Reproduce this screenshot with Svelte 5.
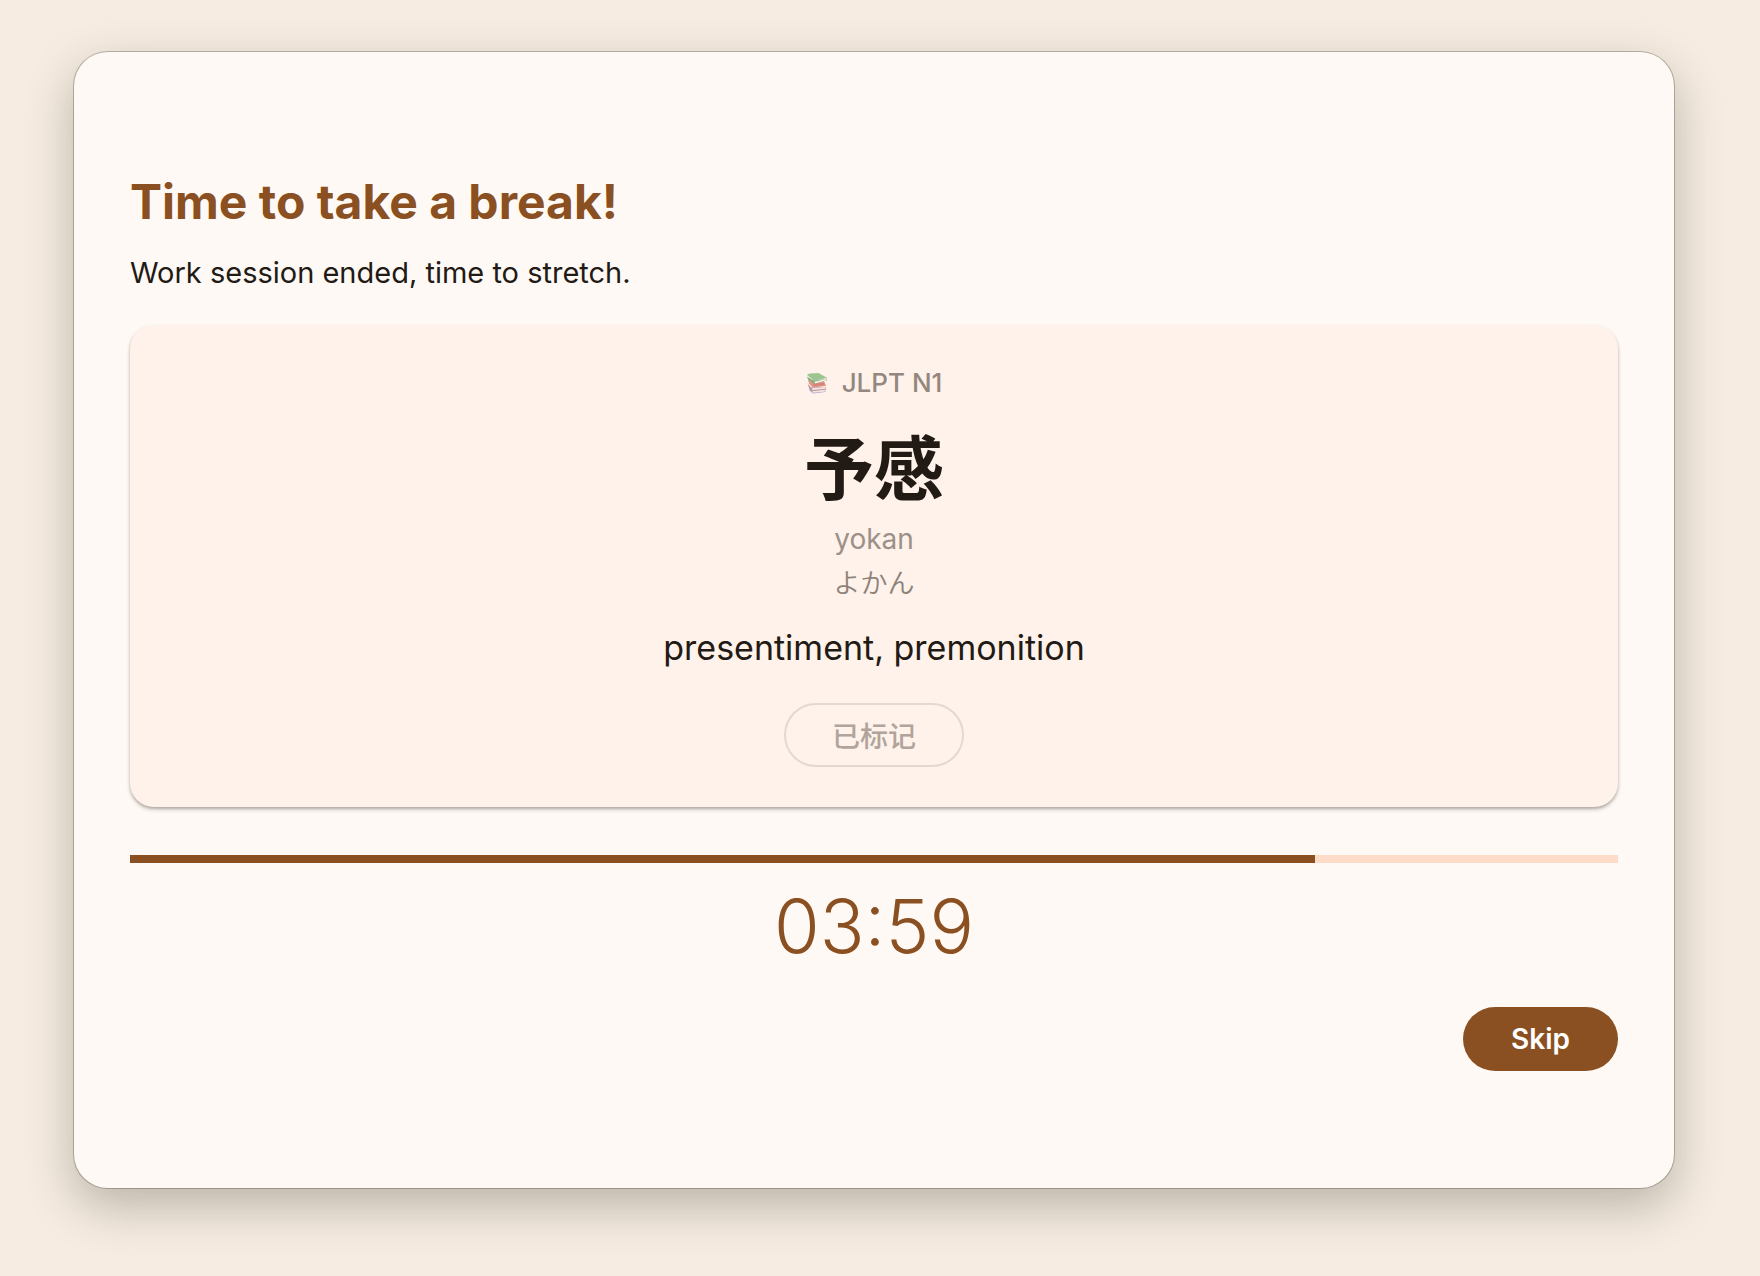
<script>
  let total = 300;
  let remaining = 239;

  const word = {
    level: 'JLPT N1',
    text: '予感',
    romaji: 'yokan',
    kana: 'よかん',
    meaning: 'presentiment, premonition'
  };

  function pad(n) {
    return String(n).padStart(2, '0');
  }

  function skip() {
    remaining = 0;
  }

  $: clock = `${pad(Math.floor(remaining / 60))}:${pad(remaining % 60)}`;
  $: percent = (remaining / total) * 100;
</script>

<div class="desktop">
  <main class="window">
    <h1>Time to take a break!</h1>
    <p class="subtitle">Work session ended, time to stretch.</p>

    <section class="card">
      <div class="level">
        <svg class="books" viewBox="0 0 22 22" aria-hidden="true">
          <path d="M3 15.5 L15 15 L20 18 L19.5 20 L7 21.5 L3.5 18.5 Z" fill="#a9a6c4" />
          <path d="M6.5 19 L19.5 17.5 L19.5 19.5 L7 20.8 Z" fill="#f1e6e3" />
          <path d="M2 12 L6 16.5 L20 15 L20 17.5 L6.5 19 L2.5 15 Z" fill="#c9908f" />
          <path d="M6 16.3 L19.5 15 L19.5 16.8 L6.5 18 Z" fill="#f6e9e4" />
          <path d="M2 7.5 L18 9 L20 14 L6.5 15.5 L3 11.5 Z" fill="#e0998b" />
          <path d="M6.5 11.5 L18 10.5 L18.5 13 L7 14.5 Z" fill="#d98379" />
          <path d="M1 4.5 L8 9 L21 6.5 L21 8.5 L8.5 12 L2 7.5 Z" fill="#86ad80" />
          <path d="M8.5 9.7 L20.5 6.8 L20.5 8.4 L9 11.4 Z" fill="#f2ede2" />
          <path d="M1 3 Q2 1.5 4 1.5 L12.5 1 L21 5.8 L8.5 9 Z" fill="#9cc592" />
        </svg>
        <span>{word.level}</span>
      </div>
      <h2 lang="ja">{word.text}</h2>
      <p class="romaji">{word.romaji}</p>
      <p class="kana" lang="ja">{word.kana}</p>
      <p class="meaning">{word.meaning}</p>
      <button class="marked" lang="zh-CN" disabled>已标记</button>
    </section>

    <div class="track" role="progressbar" aria-label="Break time left" aria-valuemin="0" aria-valuemax={total} aria-valuenow={remaining}>
      <div class="fill" style="width: {percent}%"></div>
    </div>
    <time class="clock">{clock}</time>

    <button class="skip" on:click={skip}>Skip</button>
  </main>
</div>

<style>
:global(body) {
  background-color: #f6ece1;
  color: #221a14;
  font-family: Inter, 'Noto Sans CJK JP', sans-serif;
}

h1, h2, p {
  margin: 0;
}

.desktop {
  display: flex;
  box-sizing: border-box;
  min-height: 100vh;
  padding: 52px 86px 88px 74px;
}

.window {
  flex: 1;
  display: flex;
  flex-direction: column;
  justify-content: center;
  padding: 56px;
  border-radius: 34px;
  background-color: #fff9f5;
  box-shadow:
    0 0 0 1px rgba(50, 50, 40, 0.3),
    0 18px 48px rgba(50, 50, 40, 0.3);
}

h1 {
  font-size: 48px;
  line-height: 66px;
  font-weight: 700;
  color: #8b5021;
}

.subtitle {
  margin-top: 18px;
  font-size: 29px;
  line-height: 40px;
}

.card {
  display: flex;
  flex-direction: column;
  align-items: center;
  margin-top: 32px;
  padding: 42px 40px 40px;
  border-radius: 24px;
  background-color: #fff2ea;
  box-shadow:
    0 2px 3px rgba(34, 26, 20, 0.28),
    0 3px 5px rgba(34, 26, 20, 0.1);
}

.level {
  display: flex;
  align-items: center;
  gap: 14px;
  font-size: 26px;
  line-height: 32px;
  font-weight: 500;
  color: #94877f;
}

.books {
  width: 22px;
  height: 22px;
}

h2 {
  margin-top: 14px;
  font-family: 'Noto Sans CJK JP', sans-serif;
  font-size: 70px;
  line-height: 104px;
  font-weight: 700;
}

.romaji {
  margin-top: 2px;
  font-size: 28px;
  line-height: 40px;
  color: #9c9088;
}

.kana {
  margin-top: 5px;
  font-size: 27px;
  line-height: 40px;
  font-weight: 350;
  color: #8e8279;
}

.meaning {
  margin-top: 20px;
  font-size: 34px;
  line-height: 48px;
}

button {
  height: 64px;
  padding: 0 48px;
  border: none;
  border-radius: 32px;
  font-family: inherit;
  font-size: 28px;
}

.marked {
  margin-top: 31px;
  padding: 0 46px;
  border: 2px solid #e6d8cf;
  background: none;
  font-family: 'Noto Sans CJK SC', sans-serif;
  font-weight: 500;
  color: #b0a49c;
}

.track {
  height: 8px;
  margin-top: 48px;
  background-color: #ffdcc7;
}

.fill {
  height: 100%;
  background-color: #8b5021;
}

.clock {
  margin-top: 15px;
  font-size: 74px;
  line-height: 96px;
  font-weight: 350;
  text-align: center;
  color: #8b5021;
}

.skip {
  align-self: flex-end;
  margin-top: 33px;
  background-color: #8b5021;
  font-weight: 600;
  color: #fff;
  cursor: pointer;
}
</style>
